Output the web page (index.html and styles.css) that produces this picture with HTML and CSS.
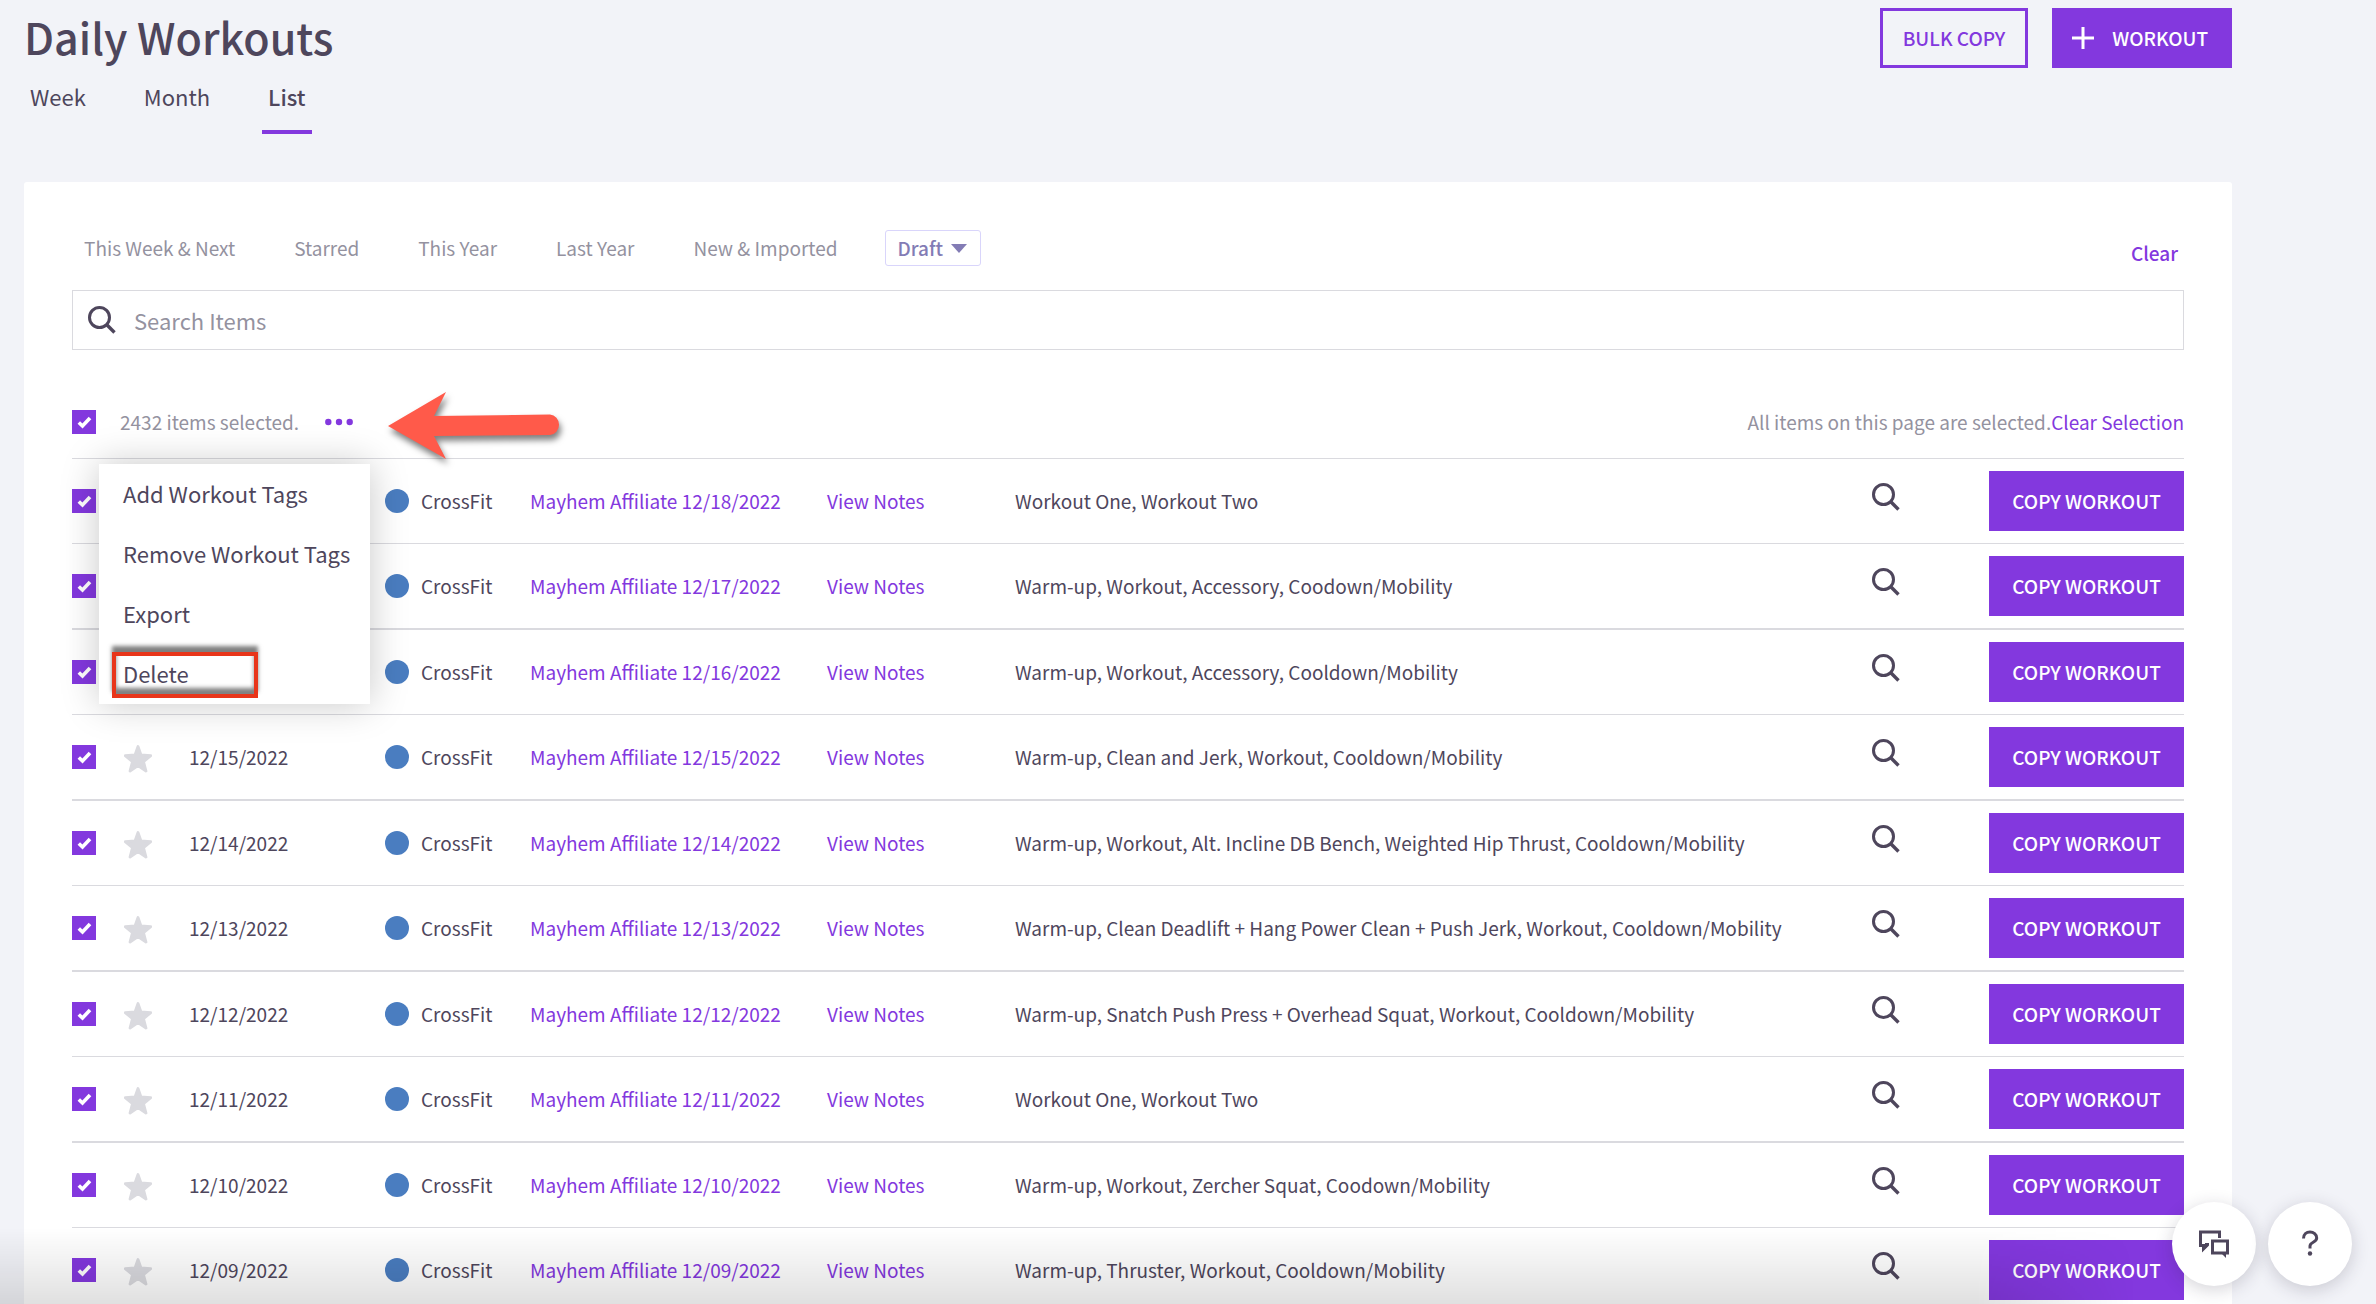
FILE: index.html
```html
<!DOCTYPE html>
<html lang="en">
<head>
<meta charset="utf-8">
<meta name="viewport" content="width=device-width, initial-scale=1">
<title>Daily Workouts</title>
<link rel="stylesheet" href="styles.css">
</head>
<body>
<svg class="sprite" aria-hidden="true">
  <symbol id="search" viewBox="0 0 28 28"><circle cx="11.5" cy="11.5" r="10" fill="none" stroke="currentColor" stroke-width="3"/><path d="M18.8 18.8 26.5 26.5" stroke="currentColor" stroke-width="3.4"/></symbol>
  <symbol id="star" viewBox="0 0 28 28"><path d="M14 1.500 17 10 26.800 10.600 19.500 16.600 22 26 14 20.500 6 26 8.500 16.600 1.200 10.600 11 10Z" fill="currentColor" stroke="currentColor" stroke-width="2.800" stroke-linejoin="round"/></symbol>
</svg>
<div class="page">
  <header class="header">
    <h1 class="title">Daily Workouts</h1>
    <div class="actions">
      <button class="btn btn-outline" type="button">BULK COPY</button>
      <button class="btn btn-add" type="button"><svg class="plus" viewBox="0 0 22 22" aria-hidden="true"><path d="M11 0V22M0 11H22" stroke="currentColor" stroke-width="3"/></svg>WORKOUT</button>
    </div>
  </header>
  <nav class="tabs">
    <a class="tab" href="#week">Week</a>
    <a class="tab" href="#month">Month</a>
    <a class="tab tab-active" href="#list" aria-current="page">List</a>
  </nav>
  <main class="panel">
    <div class="filters">
      <a class="filter" href="#next">This Week &amp; Next</a>
      <a class="filter" href="#starred">Starred</a>
      <a class="filter" href="#this-year">This Year</a>
      <a class="filter" href="#last-year">Last Year</a>
      <a class="filter" href="#new">New &amp; Imported</a>
      <select class="status" aria-label="Status"><option>Draft</option></select>
      <a class="clear" href="#clear">Clear</a>
    </div>
    <label class="search">
      <svg class="icon" aria-hidden="true"><use href="#search"/></svg>
      <input class="search-input" type="search" placeholder="Search Items" aria-label="Search Items">
    </label>
    <div class="selection">
      <input class="check" type="checkbox" checked id="all">
      <label class="count" for="all">2432 items selected.</label>
      <button class="more" type="button" aria-label="More actions"><svg class="dots" viewBox="0 0 28 8" aria-hidden="true"><g fill="currentColor"><circle cx="3.3" cy="4" r="3.2"/><circle cx="14" cy="4" r="3.2"/><circle cx="24.7" cy="4" r="3.2"/></g></svg></button>
      <span class="notice">All items on this page are selected.<a class="link" href="#clear-selection">Clear Selection</a></span>
      <div class="menu">
        <button class="menu-item" type="button">Add Workout Tags</button>
        <button class="menu-item" type="button">Remove Workout Tags</button>
        <button class="menu-item" type="button">Export</button>
        <button class="menu-item" type="button">Delete</button>
        <span class="highlight"></span>
      </div>
      <svg class="arrow" viewBox="0 0 180 80" aria-hidden="true"><path d="M3 38 61 4 49 28 165 26.500A10 10.300 0 0 1 165 47L49 48 61 71Z" fill="#ff5a4a"/></svg>
    </div>
    <table class="table">
      <colgroup><col class="c-check"><col class="c-star"><col class="c-date"><col class="c-type"><col class="c-name"><col class="c-notes"><col><col class="c-view"><col class="c-copy"></colgroup>
      <tbody>
      <tr><td><input class="check" type="checkbox" checked aria-label="Select 12/18/2022"></td><td><svg class="star" aria-hidden="true"><use href="#star"/></svg></td><td></td><td><span class="type">CrossFit</span></td><td><a class="link" href="#w18">Mayhem Affiliate 12/18/2022</a></td><td><a class="link" href="#n18">View Notes</a></td><td>Workout One, Workout Two</td><td><button class="view" type="button" aria-label="View"><svg class="icon" aria-hidden="true"><use href="#search"/></svg></button></td><td><button class="btn btn-copy" type="button">COPY WORKOUT</button></td></tr>
      <tr><td><input class="check" type="checkbox" checked aria-label="Select 12/17/2022"></td><td><svg class="star" aria-hidden="true"><use href="#star"/></svg></td><td></td><td><span class="type">CrossFit</span></td><td><a class="link" href="#w17">Mayhem Affiliate 12/17/2022</a></td><td><a class="link" href="#n17">View Notes</a></td><td>Warm-up, Workout, Accessory, Coodown/Mobility</td><td><button class="view" type="button" aria-label="View"><svg class="icon" aria-hidden="true"><use href="#search"/></svg></button></td><td><button class="btn btn-copy" type="button">COPY WORKOUT</button></td></tr>
      <tr><td><input class="check" type="checkbox" checked aria-label="Select 12/16/2022"></td><td><svg class="star" aria-hidden="true"><use href="#star"/></svg></td><td></td><td><span class="type">CrossFit</span></td><td><a class="link" href="#w16">Mayhem Affiliate 12/16/2022</a></td><td><a class="link" href="#n16">View Notes</a></td><td>Warm-up, Workout, Accessory, Cooldown/Mobility</td><td><button class="view" type="button" aria-label="View"><svg class="icon" aria-hidden="true"><use href="#search"/></svg></button></td><td><button class="btn btn-copy" type="button">COPY WORKOUT</button></td></tr>
      <tr><td><input class="check" type="checkbox" checked aria-label="Select 12/15/2022"></td><td><svg class="star" aria-hidden="true"><use href="#star"/></svg></td><td>12/15/2022</td><td><span class="type">CrossFit</span></td><td><a class="link" href="#w15">Mayhem Affiliate 12/15/2022</a></td><td><a class="link" href="#n15">View Notes</a></td><td>Warm-up, Clean and Jerk, Workout, Cooldown/Mobility</td><td><button class="view" type="button" aria-label="View"><svg class="icon" aria-hidden="true"><use href="#search"/></svg></button></td><td><button class="btn btn-copy" type="button">COPY WORKOUT</button></td></tr>
      <tr><td><input class="check" type="checkbox" checked aria-label="Select 12/14/2022"></td><td><svg class="star" aria-hidden="true"><use href="#star"/></svg></td><td>12/14/2022</td><td><span class="type">CrossFit</span></td><td><a class="link" href="#w14">Mayhem Affiliate 12/14/2022</a></td><td><a class="link" href="#n14">View Notes</a></td><td>Warm-up, Workout, Alt. Incline DB Bench, Weighted Hip Thrust, Cooldown/Mobility</td><td><button class="view" type="button" aria-label="View"><svg class="icon" aria-hidden="true"><use href="#search"/></svg></button></td><td><button class="btn btn-copy" type="button">COPY WORKOUT</button></td></tr>
      <tr><td><input class="check" type="checkbox" checked aria-label="Select 12/13/2022"></td><td><svg class="star" aria-hidden="true"><use href="#star"/></svg></td><td>12/13/2022</td><td><span class="type">CrossFit</span></td><td><a class="link" href="#w13">Mayhem Affiliate 12/13/2022</a></td><td><a class="link" href="#n13">View Notes</a></td><td>Warm-up, Clean Deadlift + Hang Power Clean + Push Jerk, Workout, Cooldown/Mobility</td><td><button class="view" type="button" aria-label="View"><svg class="icon" aria-hidden="true"><use href="#search"/></svg></button></td><td><button class="btn btn-copy" type="button">COPY WORKOUT</button></td></tr>
      <tr><td><input class="check" type="checkbox" checked aria-label="Select 12/12/2022"></td><td><svg class="star" aria-hidden="true"><use href="#star"/></svg></td><td>12/12/2022</td><td><span class="type">CrossFit</span></td><td><a class="link" href="#w12">Mayhem Affiliate 12/12/2022</a></td><td><a class="link" href="#n12">View Notes</a></td><td>Warm-up, Snatch Push Press + Overhead Squat, Workout, Cooldown/Mobility</td><td><button class="view" type="button" aria-label="View"><svg class="icon" aria-hidden="true"><use href="#search"/></svg></button></td><td><button class="btn btn-copy" type="button">COPY WORKOUT</button></td></tr>
      <tr><td><input class="check" type="checkbox" checked aria-label="Select 12/11/2022"></td><td><svg class="star" aria-hidden="true"><use href="#star"/></svg></td><td>12/11/2022</td><td><span class="type">CrossFit</span></td><td><a class="link" href="#w11">Mayhem Affiliate 12/11/2022</a></td><td><a class="link" href="#n11">View Notes</a></td><td>Workout One, Workout Two</td><td><button class="view" type="button" aria-label="View"><svg class="icon" aria-hidden="true"><use href="#search"/></svg></button></td><td><button class="btn btn-copy" type="button">COPY WORKOUT</button></td></tr>
      <tr><td><input class="check" type="checkbox" checked aria-label="Select 12/10/2022"></td><td><svg class="star" aria-hidden="true"><use href="#star"/></svg></td><td>12/10/2022</td><td><span class="type">CrossFit</span></td><td><a class="link" href="#w10">Mayhem Affiliate 12/10/2022</a></td><td><a class="link" href="#n10">View Notes</a></td><td>Warm-up, Workout, Zercher Squat, Coodown/Mobility</td><td><button class="view" type="button" aria-label="View"><svg class="icon" aria-hidden="true"><use href="#search"/></svg></button></td><td><button class="btn btn-copy" type="button">COPY WORKOUT</button></td></tr>
      <tr><td><input class="check" type="checkbox" checked aria-label="Select 12/09/2022"></td><td><svg class="star" aria-hidden="true"><use href="#star"/></svg></td><td>12/09/2022</td><td><span class="type">CrossFit</span></td><td><a class="link" href="#w09">Mayhem Affiliate 12/09/2022</a></td><td><a class="link" href="#n09">View Notes</a></td><td>Warm-up, Thruster, Workout, Cooldown/Mobility</td><td><button class="view" type="button" aria-label="View"><svg class="icon" aria-hidden="true"><use href="#search"/></svg></button></td><td><button class="btn btn-copy" type="button">COPY WORKOUT</button></td></tr>
      </tbody>
    </table>
  </main>
</div>
<div class="fade"></div>
<div class="fabs">
  <button class="fab" type="button" aria-label="Chat"><svg class="fab-icon" viewBox="0 0 30 30" aria-hidden="true"><path d="M20.500 9V3H1.500V16.500H4.500V20L9 15.500" fill="none" stroke="currentColor" stroke-width="3"/><path d="M3 15V22L10 16V14H6V17L4 18Z" fill="currentColor"/><path d="M13.500 12H28.500V24H13.500Z" fill="none" stroke="currentColor" stroke-width="3"/><path d="M22 24H27V29Z" fill="currentColor"/></svg></button>
  <button class="fab" type="button" aria-label="Help"><svg class="fab-icon" viewBox="0 0 30 30" aria-hidden="true"><path d="M8.500 9.500C8.500 5 11.500 3 15 3S21.700 5.500 21.700 9C21.700 13.500 15 13 15 17V19.500" fill="none" stroke="currentColor" stroke-width="3"/><circle cx="15" cy="24.500" r="2.200" fill="currentColor"/></svg></button>
</div>
</body>
</html>
```
FILE: styles.css
```css
:root {
  --ink: #4e465c;
  --muted: #94929f;
  --purple: #8338de;
  --line: #dadadf;
}

* { box-sizing: border-box; }

body {
  margin: 0;
  height: 100vh;
  overflow: hidden;
  background: #f2f3f8;
  color: var(--ink);
  font: 400 19px/28px "Noto Sans CJK SC", "Noto Sans", sans-serif;
}

button, input, select { font: inherit; color: inherit; }
button { border: 0; padding: 0; background: none; }
a { color: inherit; text-decoration: none; }
.sprite { display: none; }
.link { color: var(--purple); }

.page { margin: 0 144px 0 24px; }

.header {
  display: flex;
  justify-content: space-between;
  padding-top: 8px;
  height: 76px;
}
.title { margin: 0; font-size: 43px; line-height: 56px; font-weight: 500; }
.actions { display: flex; gap: 24px; }

.btn {
  height: 60px;
  padding: 0 24px;
  background: var(--purple);
  color: #fff;
  font-weight: 500;
  white-space: nowrap;
}
.btn-outline {
  border: 3px solid var(--purple);
  padding: 0 20px;
  background: none;
  color: var(--purple);
}
.btn-add { display: flex; align-items: center; gap: 18px; padding-left: 20px; }
.btn-copy { width: 100%; padding: 0; display: block; }
.plus { width: 22px; height: 22px; }

.tabs { display: flex; gap: 46px; margin-bottom: 48px; font-size: 22px; }
.tab { padding: 6px 6px 20px; border-bottom: 4px solid transparent; line-height: 28px; }
.tab-active { border-color: var(--purple); font-weight: 500; }

.panel {
  padding: 48px 48px 0;
  background: #fff;
  border-radius: 3px;
}

.filters { display: flex; align-items: center; gap: 35px; height: 60px; padding-bottom: 24px; }
.filter { padding: 0 12px; color: var(--muted); }
.status {
  width: 96px;
  height: 36px;
  padding: 0 12px;
  appearance: none;
  border: 1px solid #d9d5fb;
  border-radius: 3px;
  color: #837cb5;
  font-weight: 500;
  line-height: 28px;
  background: #fff url("data:image/svg+xml,%3Csvg xmlns='http://www.w3.org/2000/svg' viewBox='0 0 16 9'%3E%3Cpath d='M0 0H16L8 9Z' fill='%23837cb5'/%3E%3C/svg%3E") no-repeat right 13px center / 16px 9px;
}
.clear { margin-left: auto; padding: 10px 6px 0; color: var(--purple); font-weight: 500; }

.search {
  display: flex;
  align-items: center;
  gap: 18px;
  height: 60px;
  padding: 0 15px;
  border: 1px solid var(--line);
}
.icon { display: block; width: 28px; height: 28px; }
.search-input {
  flex: 1;
  padding: 0;
  border: 0;
  outline: 0;
  background: none;
  font-size: 22px;
  appearance: none;
}
.search-input::placeholder { color: var(--muted); opacity: 1; }

.selection {
  position: relative;
  display: flex;
  align-items: center;
  height: 109px;
  padding-top: 36px;
  border-bottom: 1px solid var(--line);
  color: var(--muted);
}
.check {
  appearance: none;
  display: block;
  width: 24px;
  height: 24px;
  margin: 0;
  background: var(--purple) url("data:image/svg+xml,%3Csvg xmlns='http://www.w3.org/2000/svg' viewBox='0 0 24 24'%3E%3Cpath d='M6.800 12.500 10.500 16 18 8' fill='none' stroke='white' stroke-width='3.600'/%3E%3C/svg%3E");
}
.count { margin-left: 24px; }
.more { margin-left: 26px; color: var(--purple); }
.dots { display: block; width: 28px; height: 8px; }
.notice { margin-left: auto; }

.menu {
  position: absolute;
  z-index: 2;
  top: 114px;
  left: 27px;
  width: 271px;
  background: #fff;
  box-shadow: 0 0 36px rgba(0, 0, 0, .22);
}
.menu-item {
  display: block;
  width: 100%;
  height: 60px;
  padding: 0 24px 2px;
  color: var(--ink);
  font-size: 22px;
  text-align: left;
  white-space: nowrap;
}
.highlight {
  position: absolute;
  left: 13px;
  bottom: 6px;
  width: 146px;
  height: 46px;
  border: 4px solid #e8351a;
  box-shadow: 0 -6px 4px rgba(0, 0, 0, .5), inset 0 -6px 4px rgba(0, 0, 0, .5);
}
.arrow {
  position: absolute;
  top: 38px;
  left: 313px;
  width: 180px;
  height: 80px;
  overflow: visible;
  filter: drop-shadow(2px 5px 3px rgba(0, 0, 0, .5));
}

.table { width: 100%; table-layout: fixed; border-spacing: 0; }
.c-check { width: 52px; }
.c-star { width: 65px; }
.c-date { width: 196px; }
.c-type { width: 145px; }
.c-name { width: 297px; }
.c-notes { width: 188px; }
.c-view { width: 117px; }
.c-copy { width: 195px; }
.table td { height: 85px; padding: 0; border-bottom: 1px solid var(--line); white-space: nowrap; }
.table tr:nth-child(even) td { height: 86px; border-bottom-width: 2px; }
.star { display: block; width: 28px; height: 28px; margin-top: 4px; color: var(--line); }
.type { display: flex; align-items: center; gap: 12px; }
.type::before { content: ""; width: 24px; height: 24px; border-radius: 50%; background: #4a7dc0; }
.view { display: block; padding-bottom: 8px; }

.fade {
  position: fixed;
  inset: auto 240px 0 0;
  height: 76px;
  pointer-events: none;
  background: linear-gradient(transparent, rgba(0, 0, 0, .12));
  mask-image: linear-gradient(to left, transparent, #000 160px);
}

.fabs { position: fixed; right: 24px; bottom: 18px; display: flex; gap: 12px; }
.fab {
  display: grid;
  place-items: center;
  width: 84px;
  height: 84px;
  border-radius: 50%;
  background: #fff;
  box-shadow: 0 4px 18px rgba(40, 35, 60, .2);
}
.fab-icon { width: 30px; height: 30px; }
```
